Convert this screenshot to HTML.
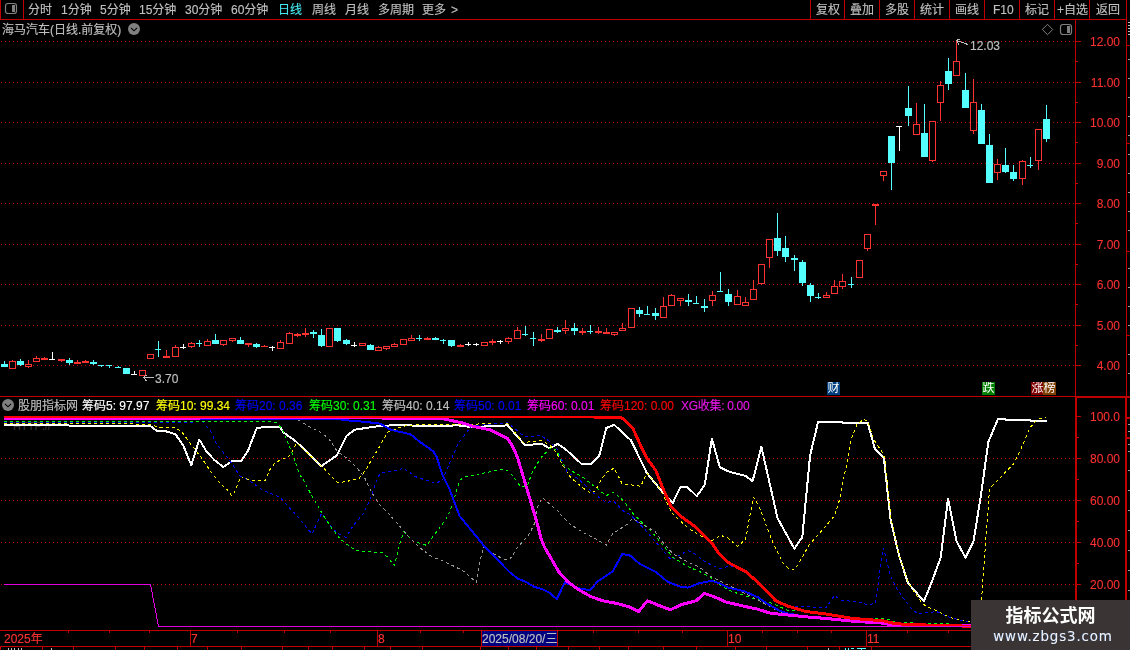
<!DOCTYPE html>
<html><head><meta charset="utf-8"><title>chart</title>
<style>
html,body{margin:0;padding:0;background:#000;}
body{width:1130px;height:650px;position:relative;overflow:hidden;font-family:"Liberation Sans","Noto Sans CJK SC",sans-serif;}
.t{position:absolute;font-size:12px;line-height:14px;white-space:nowrap;margin-top:1px;-webkit-text-stroke:0.15px currentColor;}
.r{text-align:right;-webkit-text-stroke:0.1px currentColor;}
.b{position:absolute;width:13px;height:13px;color:#fff;font-size:12px;line-height:13px;text-align:center;overflow:hidden;}
.wm1{position:absolute;left:971px;width:159px;top:604px;text-align:center;color:#fff;font-weight:bold;font-size:18px;line-height:24px;}
.wm2{position:absolute;left:976px;width:154px;top:626px;text-align:center;color:#f2f2f2;font-family:'DejaVu Sans',sans-serif;font-size:13.5px;letter-spacing:0.8px;line-height:20px;text-shadow:-0.5px 0.3px 0 rgba(58,123,224,0.7);}
</style></head><body>
<div class="t" style="left:13px;top:418px;color:#383838;font-size:11px">HTTP://</div>
<svg width="1130" height="650" viewBox="0 0 1130 650" shape-rendering="crispEdges" style="position:absolute;left:0;top:0">
<rect x="0" y="0" width="1" height="20" fill="#c00000"/>
<rect x="0" y="19" width="1127" height="1" fill="#c00000"/>
<rect x="23" y="0" width="1" height="19" fill="#c00000"/>
<rect x="810" y="0" width="1" height="19" fill="#c00000"/>
<rect x="844" y="0" width="1" height="19" fill="#c00000"/>
<rect x="879" y="0" width="1" height="19" fill="#c00000"/>
<rect x="914" y="0" width="1" height="19" fill="#c00000"/>
<rect x="949" y="0" width="1" height="19" fill="#c00000"/>
<rect x="984" y="0" width="1" height="19" fill="#c00000"/>
<rect x="1019" y="0" width="1" height="19" fill="#c00000"/>
<rect x="1054" y="0" width="1" height="19" fill="#c00000"/>
<rect x="1089" y="0" width="1" height="19" fill="#c00000"/>
<rect x="1126" y="0" width="1" height="397" fill="#c00000"/>
<rect x="1125" y="397" width="2" height="253" fill="#c00000"/>
<rect x="1075" y="19" width="1" height="378" fill="#c00000"/>
<rect x="1075" y="397" width="2" height="250" fill="#c00000"/>
<rect x="0" y="396" width="1075" height="1" fill="#c00000"/>
<rect x="1075" y="396" width="55" height="2" fill="#c00000"/>
<rect x="0" y="630" width="1075" height="1" fill="#c00000"/>
<rect x="0" y="646" width="1130" height="1" fill="#c00000"/>
<rect x="1127" y="45" width="3" height="1" fill="#c00000"/>
<rect x="1127" y="143" width="3" height="1" fill="#c00000"/>
<rect x="1127" y="251" width="3" height="1" fill="#c00000"/>
<rect x="1127" y="335" width="3" height="1" fill="#c00000"/>
<rect x="1127" y="417" width="3" height="2" fill="#c00000"/>
<rect x="1127" y="437" width="3" height="2" fill="#c00000"/>
<rect x="1128" y="59" width="2" height="1" fill="#a0a0a0"/>
<rect x="1128" y="78" width="2" height="1" fill="#a0a0a0"/>
<rect x="1128" y="97" width="2" height="1" fill="#a0a0a0"/>
<rect x="1128" y="116" width="2" height="1" fill="#a0a0a0"/>
<rect x="1128" y="135" width="2" height="1" fill="#a0a0a0"/>
<rect x="1128" y="154" width="2" height="1" fill="#a0a0a0"/>
<rect x="1128" y="173" width="2" height="1" fill="#a0a0a0"/>
<rect x="1128" y="192" width="2" height="1" fill="#a0a0a0"/>
<rect x="1128" y="211" width="2" height="1" fill="#a0a0a0"/>
<rect x="1128" y="230" width="2" height="1" fill="#a0a0a0"/>
<rect x="1128" y="268" width="2" height="1" fill="#a0a0a0"/>
<rect x="1128" y="287" width="2" height="1" fill="#a0a0a0"/>
<rect x="1128" y="306" width="2" height="1" fill="#a0a0a0"/>
<rect x="1128" y="325" width="2" height="1" fill="#a0a0a0"/>
<rect x="1128" y="354" width="2" height="1" fill="#a0a0a0"/>
<rect x="1128" y="373" width="2" height="1" fill="#a0a0a0"/>
<rect x="1128" y="424" width="2" height="1" fill="#a0a0a0"/>
<rect x="1128" y="431" width="2" height="1" fill="#a0a0a0"/>
<rect x="1128" y="444" width="2" height="1" fill="#a0a0a0"/>
<rect x="1128" y="451" width="2" height="1" fill="#a0a0a0"/>
<rect x="1128" y="470" width="2" height="1" fill="#a0a0a0"/>
<rect x="1128" y="490" width="2" height="1" fill="#a0a0a0"/>
<rect x="1128" y="510" width="2" height="1" fill="#a0a0a0"/>
<rect x="1128" y="530" width="2" height="1" fill="#a0a0a0"/>
<rect x="1128" y="550" width="2" height="1" fill="#a0a0a0"/>
<rect x="1128" y="570" width="2" height="1" fill="#a0a0a0"/>
<rect x="1128" y="590" width="2" height="1" fill="#a0a0a0"/>
<rect x="1128" y="22" width="2" height="1" fill="#c0c0c0"/>
<rect x="1128" y="25" width="2" height="1" fill="#c0c0c0"/>
<rect x="1128" y="28" width="2" height="1" fill="#c0c0c0"/>
<rect x="1128" y="31" width="2" height="1" fill="#c0c0c0"/>
<rect x="1128" y="34" width="2" height="1" fill="#c0c0c0"/>
<path d="M1 41.5H1074" stroke="#c00000" stroke-width="1" stroke-dasharray="1 3" fill="none"/>
<path d="M1 82.5H1074" stroke="#c00000" stroke-width="1" stroke-dasharray="1 3" fill="none"/>
<path d="M1 122.5H1074" stroke="#c00000" stroke-width="1" stroke-dasharray="1 3" fill="none"/>
<path d="M1 163.5H1074" stroke="#c00000" stroke-width="1" stroke-dasharray="1 3" fill="none"/>
<path d="M1 203.5H1074" stroke="#c00000" stroke-width="1" stroke-dasharray="1 3" fill="none"/>
<path d="M1 244.5H1074" stroke="#c00000" stroke-width="1" stroke-dasharray="1 3" fill="none"/>
<path d="M1 284.5H1074" stroke="#c00000" stroke-width="1" stroke-dasharray="1 3" fill="none"/>
<path d="M1 325.5H1074" stroke="#c00000" stroke-width="1" stroke-dasharray="1 3" fill="none"/>
<path d="M1 365.5H1074" stroke="#c00000" stroke-width="1" stroke-dasharray="1 3" fill="none"/>
<path d="M1 458.5H1074" stroke="#c00000" stroke-width="1" stroke-dasharray="1 3" fill="none"/>
<path d="M1 500.5H1074" stroke="#c00000" stroke-width="1" stroke-dasharray="1 3" fill="none"/>
<path d="M1 542.5H1074" stroke="#c00000" stroke-width="1" stroke-dasharray="1 3" fill="none"/>
<path d="M1 584.5H1074" stroke="#c00000" stroke-width="1" stroke-dasharray="1 3" fill="none"/>
<rect x="1076" y="41" width="5" height="1" fill="#c00000"/>
<rect x="1076" y="61" width="2" height="1" fill="#c00000"/>
<rect x="1076" y="82" width="5" height="1" fill="#c00000"/>
<rect x="1076" y="102" width="2" height="1" fill="#c00000"/>
<rect x="1076" y="122" width="5" height="1" fill="#c00000"/>
<rect x="1076" y="142" width="2" height="1" fill="#c00000"/>
<rect x="1076" y="163" width="5" height="1" fill="#c00000"/>
<rect x="1076" y="183" width="2" height="1" fill="#c00000"/>
<rect x="1076" y="203" width="5" height="1" fill="#c00000"/>
<rect x="1076" y="223" width="2" height="1" fill="#c00000"/>
<rect x="1076" y="244" width="5" height="1" fill="#c00000"/>
<rect x="1076" y="264" width="2" height="1" fill="#c00000"/>
<rect x="1076" y="284" width="5" height="1" fill="#c00000"/>
<rect x="1076" y="304" width="2" height="1" fill="#c00000"/>
<rect x="1076" y="325" width="5" height="1" fill="#c00000"/>
<rect x="1076" y="345" width="2" height="1" fill="#c00000"/>
<rect x="1076" y="365" width="5" height="1" fill="#c00000"/>
<rect x="1077" y="416" width="4" height="1" fill="#c00000"/>
<rect x="1077" y="458" width="4" height="1" fill="#c00000"/>
<rect x="1077" y="500" width="4" height="1" fill="#c00000"/>
<rect x="1077" y="542" width="4" height="1" fill="#c00000"/>
<rect x="1077" y="584" width="4" height="1" fill="#c00000"/>
<rect x="1077" y="626" width="4" height="1" fill="#c00000"/>
<rect x="1077" y="437" width="2" height="1" fill="#c00000"/>
<rect x="1077" y="479" width="2" height="1" fill="#c00000"/>
<rect x="1077" y="521" width="2" height="1" fill="#c00000"/>
<rect x="1077" y="563" width="2" height="1" fill="#c00000"/>
<rect x="1077" y="605" width="2" height="1" fill="#c00000"/>
<rect x="68" y="631" width="1" height="2" fill="#c00000"/>
<rect x="109" y="631" width="1" height="2" fill="#c00000"/>
<rect x="149" y="631" width="1" height="2" fill="#c00000"/>
<rect x="237" y="631" width="1" height="2" fill="#c00000"/>
<rect x="284" y="631" width="1" height="2" fill="#c00000"/>
<rect x="330" y="631" width="1" height="2" fill="#c00000"/>
<rect x="420" y="631" width="1" height="2" fill="#c00000"/>
<rect x="463" y="631" width="1" height="2" fill="#c00000"/>
<rect x="593" y="631" width="1" height="2" fill="#c00000"/>
<rect x="638" y="631" width="1" height="2" fill="#c00000"/>
<rect x="682" y="631" width="1" height="2" fill="#c00000"/>
<rect x="762" y="631" width="1" height="2" fill="#c00000"/>
<rect x="797" y="631" width="1" height="2" fill="#c00000"/>
<rect x="831" y="631" width="1" height="2" fill="#c00000"/>
<rect x="907" y="631" width="1" height="2" fill="#c00000"/>
<rect x="948" y="631" width="1" height="2" fill="#c00000"/>
<rect x="989" y="631" width="1" height="2" fill="#c00000"/>
<rect x="1030" y="631" width="1" height="2" fill="#c00000"/>
<rect x="190" y="631" width="1" height="15" fill="#c00000"/>
<rect x="377" y="631" width="1" height="15" fill="#c00000"/>
<rect x="727" y="631" width="1" height="15" fill="#c00000"/>
<rect x="866" y="631" width="1" height="15" fill="#c00000"/>
<rect x="0" y="647" width="1" height="3" fill="#c00000"/>
<rect x="42" y="647" width="1" height="3" fill="#c00000"/>
<rect x="73" y="647" width="1" height="3" fill="#c00000"/>
<rect x="115" y="647" width="1" height="3" fill="#c00000"/>
<rect x="144" y="647" width="1" height="3" fill="#c00000"/>
<rect x="177" y="647" width="1" height="3" fill="#c00000"/>
<rect x="207" y="647" width="1" height="3" fill="#c00000"/>
<rect x="241" y="647" width="1" height="3" fill="#c00000"/>
<rect x="282" y="647" width="1" height="3" fill="#c00000"/>
<rect x="308" y="647" width="1" height="3" fill="#c00000"/>
<rect x="332" y="647" width="1" height="3" fill="#c00000"/>
<rect x="364" y="647" width="1" height="3" fill="#c00000"/>
<rect x="390" y="647" width="1" height="3" fill="#c00000"/>
<rect x="422" y="647" width="1" height="3" fill="#c00000"/>
<rect x="480" y="647" width="1" height="3" fill="#c00000"/>
<rect x="508" y="647" width="1" height="3" fill="#c00000"/>
<rect x="536" y="647" width="1" height="3" fill="#c00000"/>
<rect x="568" y="647" width="1" height="3" fill="#c00000"/>
<rect x="599" y="647" width="1" height="3" fill="#c00000"/>
<rect x="628" y="647" width="1" height="3" fill="#c00000"/>
<rect x="663" y="647" width="1" height="3" fill="#c00000"/>
<rect x="696" y="647" width="1" height="3" fill="#c00000"/>
<rect x="735" y="647" width="1" height="3" fill="#c00000"/>
<rect x="766" y="647" width="1" height="3" fill="#c00000"/>
<rect x="807" y="647" width="1" height="3" fill="#c00000"/>
<rect x="839" y="647" width="1" height="3" fill="#c00000"/>
<rect x="871" y="647" width="1" height="3" fill="#c00000"/>
<rect x="8" y="648" width="1" height="2" fill="#c0c0c0"/>
<rect x="11" y="648" width="1" height="2" fill="#c0c0c0"/>
<rect x="14" y="648" width="1" height="2" fill="#c0c0c0"/>
<rect x="18" y="648" width="1" height="2" fill="#c0c0c0"/>
<rect x="21" y="648" width="1" height="2" fill="#c0c0c0"/>
<rect x="51" y="648" width="1" height="2" fill="#c0c0c0"/>
<rect x="845" y="648" width="1" height="2" fill="#54ffff"/>
<rect x="848" y="648" width="1" height="2" fill="#54ffff"/>
<rect x="851" y="648" width="3" height="1" fill="#54ffff"/>
<rect x="857" y="648" width="9" height="1" fill="#54ffff"/>
<rect x="861" y="649" width="1" height="1" fill="#54ffff"/>
<rect x="828" y="648" width="1" height="2" fill="#c0c0c0"/>
<rect x="4" y="361" width="1" height="3" fill="#54ffff"/>
<rect x="1" y="364" width="7" height="3" fill="#54ffff"/>
<rect x="12" y="360" width="1" height="1" fill="#ff3232"/>
<rect x="9" y="361" width="7" height="8" fill="#ff3232"/>
<rect x="10" y="362" width="5" height="6" fill="#000"/>
<rect x="20" y="359" width="1" height="2" fill="#54ffff"/>
<rect x="20" y="365" width="1" height="1" fill="#54ffff"/>
<rect x="17" y="361" width="7" height="4" fill="#54ffff"/>
<rect x="28" y="360" width="1" height="4" fill="#ff3232"/>
<rect x="28" y="367" width="1" height="1" fill="#ff3232"/>
<rect x="25" y="364" width="7" height="3" fill="#ff3232"/>
<rect x="26" y="365" width="5" height="1" fill="#000"/>
<rect x="36" y="356" width="1" height="2" fill="#ff3232"/>
<rect x="33" y="358" width="7" height="4" fill="#ff3232"/>
<rect x="34" y="359" width="5" height="2" fill="#000"/>
<rect x="44" y="357" width="1" height="1" fill="#ff3232"/>
<rect x="41" y="358" width="7" height="2" fill="#ff3232"/>
<rect x="52" y="352" width="1" height="8" fill="#ffffff"/>
<rect x="49" y="359" width="6" height="1" fill="#ffffff"/>
<rect x="61" y="361" width="1" height="1" fill="#ff3232"/>
<rect x="58" y="359" width="7" height="2" fill="#ff3232"/>
<rect x="69" y="358" width="1" height="2" fill="#54ffff"/>
<rect x="69" y="363" width="1" height="2" fill="#54ffff"/>
<rect x="66" y="360" width="7" height="3" fill="#54ffff"/>
<rect x="77" y="360" width="1" height="2" fill="#ff3232"/>
<rect x="74" y="362" width="7" height="2" fill="#ff3232"/>
<rect x="85" y="360" width="1" height="1" fill="#ff3232"/>
<rect x="82" y="361" width="7" height="2" fill="#ff3232"/>
<rect x="93" y="360" width="1" height="2" fill="#54ffff"/>
<rect x="93" y="364" width="1" height="1" fill="#54ffff"/>
<rect x="90" y="362" width="7" height="2" fill="#54ffff"/>
<rect x="101" y="365" width="1" height="2" fill="#54ffff"/>
<rect x="98" y="365" width="6" height="1" fill="#54ffff"/>
<rect x="109" y="365" width="1" height="3" fill="#54ffff"/>
<rect x="106" y="365" width="6" height="1" fill="#54ffff"/>
<rect x="118" y="366" width="1" height="2" fill="#54ffff"/>
<rect x="115" y="367" width="6" height="1" fill="#54ffff"/>
<rect x="123" y="368" width="7" height="6" fill="#54ffff"/>
<rect x="134" y="371" width="1" height="4" fill="#ffffff"/>
<rect x="131" y="374" width="6" height="1" fill="#ffffff"/>
<rect x="139" y="370" width="7" height="6" fill="#ff3232"/>
<rect x="140" y="371" width="5" height="4" fill="#000"/>
<rect x="147" y="354" width="7" height="5" fill="#ff3232"/>
<rect x="148" y="355" width="5" height="3" fill="#000"/>
<rect x="158" y="341" width="1" height="16" fill="#54ffff"/>
<rect x="155" y="349" width="6" height="1" fill="#54ffff"/>
<rect x="166" y="350" width="1" height="6" fill="#ff3232"/>
<rect x="163" y="356" width="7" height="2" fill="#ff3232"/>
<rect x="175" y="345" width="1" height="2" fill="#ff3232"/>
<rect x="172" y="347" width="7" height="10" fill="#ff3232"/>
<rect x="173" y="348" width="5" height="8" fill="#000"/>
<rect x="183" y="344" width="1" height="5" fill="#ffffff"/>
<rect x="180" y="347" width="6" height="1" fill="#ffffff"/>
<rect x="191" y="342" width="1" height="1" fill="#ff3232"/>
<rect x="191" y="347" width="1" height="1" fill="#ff3232"/>
<rect x="188" y="343" width="7" height="4" fill="#ff3232"/>
<rect x="189" y="344" width="5" height="2" fill="#000"/>
<rect x="199" y="340" width="1" height="7" fill="#54ffff"/>
<rect x="196" y="343" width="6" height="1" fill="#54ffff"/>
<rect x="207" y="339" width="1" height="2" fill="#ff3232"/>
<rect x="204" y="341" width="7" height="5" fill="#ff3232"/>
<rect x="205" y="342" width="5" height="3" fill="#000"/>
<rect x="215" y="334" width="1" height="6" fill="#54ffff"/>
<rect x="212" y="340" width="7" height="4" fill="#54ffff"/>
<rect x="223" y="345" width="1" height="1" fill="#ff3232"/>
<rect x="220" y="340" width="7" height="5" fill="#ff3232"/>
<rect x="221" y="341" width="5" height="3" fill="#000"/>
<rect x="232" y="341" width="1" height="1" fill="#ff3232"/>
<rect x="229" y="338" width="7" height="3" fill="#ff3232"/>
<rect x="230" y="339" width="5" height="1" fill="#000"/>
<rect x="240" y="337" width="1" height="3" fill="#54ffff"/>
<rect x="237" y="340" width="7" height="4" fill="#54ffff"/>
<rect x="248" y="345" width="1" height="2" fill="#ff3232"/>
<rect x="245" y="343" width="7" height="2" fill="#ff3232"/>
<rect x="256" y="343" width="1" height="1" fill="#54ffff"/>
<rect x="256" y="347" width="1" height="1" fill="#54ffff"/>
<rect x="253" y="344" width="7" height="3" fill="#54ffff"/>
<rect x="264" y="345" width="1" height="1" fill="#ff3232"/>
<rect x="261" y="346" width="7" height="1" fill="#ff3232"/>
<rect x="272" y="346" width="1" height="5" fill="#ffffff"/>
<rect x="269" y="347" width="6" height="1" fill="#ffffff"/>
<rect x="280" y="340" width="1" height="2" fill="#ff3232"/>
<rect x="277" y="342" width="7" height="7" fill="#ff3232"/>
<rect x="278" y="343" width="5" height="5" fill="#000"/>
<rect x="289" y="332" width="1" height="1" fill="#ff3232"/>
<rect x="286" y="333" width="7" height="11" fill="#ff3232"/>
<rect x="287" y="334" width="5" height="9" fill="#000"/>
<rect x="297" y="333" width="1" height="1" fill="#ff3232"/>
<rect x="297" y="336" width="1" height="1" fill="#ff3232"/>
<rect x="294" y="334" width="7" height="2" fill="#ff3232"/>
<rect x="305" y="328" width="1" height="5" fill="#ff3232"/>
<rect x="305" y="335" width="1" height="2" fill="#ff3232"/>
<rect x="302" y="333" width="7" height="2" fill="#ff3232"/>
<rect x="313" y="330" width="1" height="2" fill="#54ffff"/>
<rect x="313" y="334" width="1" height="4" fill="#54ffff"/>
<rect x="310" y="332" width="7" height="2" fill="#54ffff"/>
<rect x="321" y="329" width="1" height="6" fill="#54ffff"/>
<rect x="321" y="346" width="1" height="1" fill="#54ffff"/>
<rect x="318" y="335" width="7" height="11" fill="#54ffff"/>
<rect x="326" y="328" width="7" height="19" fill="#ff3232"/>
<rect x="327" y="329" width="5" height="17" fill="#000"/>
<rect x="337" y="341" width="1" height="1" fill="#54ffff"/>
<rect x="334" y="328" width="7" height="13" fill="#54ffff"/>
<rect x="346" y="339" width="1" height="1" fill="#54ffff"/>
<rect x="346" y="344" width="1" height="1" fill="#54ffff"/>
<rect x="343" y="340" width="7" height="4" fill="#54ffff"/>
<rect x="354" y="342" width="1" height="5" fill="#ffffff"/>
<rect x="351" y="345" width="6" height="1" fill="#ffffff"/>
<rect x="359" y="343" width="7" height="3" fill="#ff3232"/>
<rect x="360" y="344" width="5" height="1" fill="#000"/>
<rect x="370" y="344" width="1" height="1" fill="#54ffff"/>
<rect x="367" y="345" width="7" height="5" fill="#54ffff"/>
<rect x="378" y="346" width="1" height="1" fill="#ff3232"/>
<rect x="375" y="347" width="7" height="4" fill="#ff3232"/>
<rect x="376" y="348" width="5" height="2" fill="#000"/>
<rect x="386" y="349" width="1" height="1" fill="#ff3232"/>
<rect x="383" y="346" width="7" height="3" fill="#ff3232"/>
<rect x="384" y="347" width="5" height="1" fill="#000"/>
<rect x="394" y="343" width="1" height="1" fill="#ff3232"/>
<rect x="391" y="344" width="7" height="3" fill="#ff3232"/>
<rect x="392" y="345" width="5" height="1" fill="#000"/>
<rect x="400" y="339" width="7" height="6" fill="#ff3232"/>
<rect x="401" y="340" width="5" height="4" fill="#000"/>
<rect x="411" y="335" width="1" height="3" fill="#ff3232"/>
<rect x="408" y="338" width="7" height="3" fill="#ff3232"/>
<rect x="409" y="339" width="5" height="1" fill="#000"/>
<rect x="419" y="335" width="1" height="6" fill="#54ffff"/>
<rect x="416" y="338" width="6" height="1" fill="#54ffff"/>
<rect x="427" y="337" width="1" height="1" fill="#ff3232"/>
<rect x="424" y="338" width="7" height="2" fill="#ff3232"/>
<rect x="435" y="337" width="1" height="1" fill="#54ffff"/>
<rect x="432" y="338" width="7" height="2" fill="#54ffff"/>
<rect x="443" y="339" width="1" height="5" fill="#54ffff"/>
<rect x="440" y="340" width="6" height="1" fill="#54ffff"/>
<rect x="451" y="346" width="1" height="1" fill="#54ffff"/>
<rect x="448" y="340" width="7" height="6" fill="#54ffff"/>
<rect x="460" y="344" width="1" height="1" fill="#ff3232"/>
<rect x="457" y="345" width="7" height="2" fill="#ff3232"/>
<rect x="468" y="342" width="1" height="4" fill="#ffffff"/>
<rect x="465" y="344" width="6" height="1" fill="#ffffff"/>
<rect x="476" y="343" width="1" height="3" fill="#ffffff"/>
<rect x="473" y="344" width="6" height="1" fill="#ffffff"/>
<rect x="481" y="342" width="7" height="4" fill="#ff3232"/>
<rect x="482" y="343" width="5" height="2" fill="#000"/>
<rect x="492" y="339" width="1" height="2" fill="#ff3232"/>
<rect x="492" y="343" width="1" height="2" fill="#ff3232"/>
<rect x="489" y="341" width="7" height="2" fill="#ff3232"/>
<rect x="500" y="340" width="1" height="4" fill="#ffffff"/>
<rect x="497" y="341" width="6" height="1" fill="#ffffff"/>
<rect x="508" y="337" width="1" height="1" fill="#ff3232"/>
<rect x="508" y="342" width="1" height="2" fill="#ff3232"/>
<rect x="505" y="338" width="7" height="4" fill="#ff3232"/>
<rect x="506" y="339" width="5" height="2" fill="#000"/>
<rect x="517" y="327" width="1" height="3" fill="#ff3232"/>
<rect x="514" y="330" width="7" height="9" fill="#ff3232"/>
<rect x="515" y="331" width="5" height="7" fill="#000"/>
<rect x="525" y="326" width="1" height="10" fill="#54ffff"/>
<rect x="522" y="334" width="6" height="1" fill="#54ffff"/>
<rect x="533" y="332" width="1" height="14" fill="#54ffff"/>
<rect x="530" y="338" width="6" height="1" fill="#54ffff"/>
<rect x="541" y="334" width="1" height="5" fill="#ff3232"/>
<rect x="541" y="341" width="1" height="1" fill="#ff3232"/>
<rect x="538" y="339" width="7" height="2" fill="#ff3232"/>
<rect x="546" y="329" width="7" height="10" fill="#ff3232"/>
<rect x="547" y="330" width="5" height="8" fill="#000"/>
<rect x="557" y="327" width="1" height="3" fill="#54ffff"/>
<rect x="557" y="332" width="1" height="1" fill="#54ffff"/>
<rect x="554" y="330" width="7" height="2" fill="#54ffff"/>
<rect x="565" y="320" width="1" height="8" fill="#ff3232"/>
<rect x="565" y="331" width="1" height="3" fill="#ff3232"/>
<rect x="562" y="328" width="7" height="3" fill="#ff3232"/>
<rect x="563" y="329" width="5" height="1" fill="#000"/>
<rect x="574" y="323" width="1" height="5" fill="#54ffff"/>
<rect x="574" y="331" width="1" height="4" fill="#54ffff"/>
<rect x="571" y="328" width="7" height="3" fill="#54ffff"/>
<rect x="582" y="328" width="1" height="3" fill="#ff3232"/>
<rect x="582" y="333" width="1" height="2" fill="#ff3232"/>
<rect x="579" y="331" width="7" height="2" fill="#ff3232"/>
<rect x="590" y="325" width="1" height="9" fill="#54ffff"/>
<rect x="587" y="331" width="6" height="1" fill="#54ffff"/>
<rect x="598" y="327" width="1" height="4" fill="#ff3232"/>
<rect x="598" y="333" width="1" height="1" fill="#ff3232"/>
<rect x="595" y="331" width="7" height="2" fill="#ff3232"/>
<rect x="606" y="328" width="1" height="4" fill="#ff3232"/>
<rect x="603" y="332" width="7" height="2" fill="#ff3232"/>
<rect x="614" y="335" width="1" height="1" fill="#ff3232"/>
<rect x="611" y="332" width="7" height="3" fill="#ff3232"/>
<rect x="612" y="333" width="5" height="1" fill="#000"/>
<rect x="622" y="323" width="1" height="5" fill="#ff3232"/>
<rect x="619" y="328" width="7" height="3" fill="#ff3232"/>
<rect x="620" y="329" width="5" height="1" fill="#000"/>
<rect x="628" y="308" width="7" height="20" fill="#ff3232"/>
<rect x="629" y="309" width="5" height="18" fill="#000"/>
<rect x="639" y="307" width="1" height="3" fill="#54ffff"/>
<rect x="639" y="314" width="1" height="3" fill="#54ffff"/>
<rect x="636" y="310" width="7" height="4" fill="#54ffff"/>
<rect x="647" y="306" width="1" height="9" fill="#54ffff"/>
<rect x="644" y="314" width="6" height="1" fill="#54ffff"/>
<rect x="655" y="308" width="1" height="5" fill="#54ffff"/>
<rect x="655" y="316" width="1" height="4" fill="#54ffff"/>
<rect x="652" y="313" width="7" height="3" fill="#54ffff"/>
<rect x="663" y="297" width="1" height="9" fill="#ff3232"/>
<rect x="660" y="306" width="7" height="12" fill="#ff3232"/>
<rect x="661" y="307" width="5" height="10" fill="#000"/>
<rect x="671" y="294" width="1" height="1" fill="#ff3232"/>
<rect x="668" y="295" width="7" height="11" fill="#ff3232"/>
<rect x="669" y="296" width="5" height="9" fill="#000"/>
<rect x="680" y="301" width="1" height="5" fill="#ff3232"/>
<rect x="677" y="298" width="7" height="3" fill="#ff3232"/>
<rect x="678" y="299" width="5" height="1" fill="#000"/>
<rect x="688" y="294" width="1" height="6" fill="#54ffff"/>
<rect x="688" y="302" width="1" height="4" fill="#54ffff"/>
<rect x="685" y="300" width="7" height="2" fill="#54ffff"/>
<rect x="696" y="296" width="1" height="8" fill="#54ffff"/>
<rect x="693" y="303" width="6" height="1" fill="#54ffff"/>
<rect x="704" y="299" width="1" height="7" fill="#54ffff"/>
<rect x="704" y="308" width="1" height="4" fill="#54ffff"/>
<rect x="701" y="306" width="7" height="2" fill="#54ffff"/>
<rect x="712" y="291" width="1" height="4" fill="#ff3232"/>
<rect x="712" y="301" width="1" height="5" fill="#ff3232"/>
<rect x="709" y="295" width="7" height="6" fill="#ff3232"/>
<rect x="710" y="296" width="5" height="4" fill="#000"/>
<rect x="720" y="272" width="1" height="20" fill="#54ffff"/>
<rect x="717" y="291" width="6" height="1" fill="#54ffff"/>
<rect x="728" y="289" width="1" height="5" fill="#54ffff"/>
<rect x="728" y="302" width="1" height="4" fill="#54ffff"/>
<rect x="725" y="294" width="7" height="8" fill="#54ffff"/>
<rect x="737" y="290" width="1" height="6" fill="#ff3232"/>
<rect x="734" y="296" width="7" height="9" fill="#ff3232"/>
<rect x="735" y="297" width="5" height="7" fill="#000"/>
<rect x="745" y="297" width="1" height="5" fill="#ff3232"/>
<rect x="742" y="302" width="7" height="4" fill="#ff3232"/>
<rect x="743" y="303" width="5" height="2" fill="#000"/>
<rect x="753" y="280" width="1" height="9" fill="#ff3232"/>
<rect x="750" y="289" width="7" height="11" fill="#ff3232"/>
<rect x="751" y="290" width="5" height="9" fill="#000"/>
<rect x="761" y="284" width="1" height="1" fill="#ff3232"/>
<rect x="758" y="264" width="7" height="20" fill="#ff3232"/>
<rect x="759" y="265" width="5" height="18" fill="#000"/>
<rect x="769" y="258" width="1" height="10" fill="#ff3232"/>
<rect x="766" y="239" width="7" height="19" fill="#ff3232"/>
<rect x="767" y="240" width="5" height="17" fill="#000"/>
<rect x="777" y="213" width="1" height="25" fill="#54ffff"/>
<rect x="777" y="251" width="1" height="5" fill="#54ffff"/>
<rect x="774" y="238" width="7" height="13" fill="#54ffff"/>
<rect x="785" y="236" width="1" height="12" fill="#54ffff"/>
<rect x="785" y="257" width="1" height="5" fill="#54ffff"/>
<rect x="782" y="248" width="7" height="9" fill="#54ffff"/>
<rect x="794" y="255" width="1" height="3" fill="#54ffff"/>
<rect x="794" y="260" width="1" height="11" fill="#54ffff"/>
<rect x="791" y="258" width="7" height="2" fill="#54ffff"/>
<rect x="802" y="260" width="1" height="2" fill="#54ffff"/>
<rect x="802" y="283" width="1" height="3" fill="#54ffff"/>
<rect x="799" y="262" width="7" height="21" fill="#54ffff"/>
<rect x="810" y="283" width="1" height="2" fill="#54ffff"/>
<rect x="810" y="296" width="1" height="6" fill="#54ffff"/>
<rect x="807" y="285" width="7" height="11" fill="#54ffff"/>
<rect x="818" y="293" width="1" height="6" fill="#54ffff"/>
<rect x="815" y="297" width="6" height="1" fill="#54ffff"/>
<rect x="826" y="292" width="1" height="3" fill="#ff3232"/>
<rect x="823" y="295" width="7" height="3" fill="#ff3232"/>
<rect x="824" y="296" width="5" height="1" fill="#000"/>
<rect x="834" y="280" width="1" height="6" fill="#ff3232"/>
<rect x="831" y="286" width="7" height="8" fill="#ff3232"/>
<rect x="832" y="287" width="5" height="6" fill="#000"/>
<rect x="842" y="274" width="1" height="7" fill="#ff3232"/>
<rect x="842" y="287" width="1" height="2" fill="#ff3232"/>
<rect x="839" y="281" width="7" height="6" fill="#ff3232"/>
<rect x="840" y="282" width="5" height="4" fill="#000"/>
<rect x="851" y="277" width="1" height="11" fill="#54ffff"/>
<rect x="848" y="284" width="6" height="1" fill="#54ffff"/>
<rect x="856" y="260" width="7" height="18" fill="#ff3232"/>
<rect x="857" y="261" width="5" height="16" fill="#000"/>
<rect x="867" y="249" width="1" height="2" fill="#ff3232"/>
<rect x="864" y="234" width="7" height="15" fill="#ff3232"/>
<rect x="865" y="235" width="5" height="13" fill="#000"/>
<rect x="875" y="206" width="1" height="19" fill="#ff3232"/>
<rect x="872" y="204" width="7" height="2" fill="#ff3232"/>
<rect x="883" y="176" width="1" height="5" fill="#ff3232"/>
<rect x="880" y="171" width="7" height="5" fill="#ff3232"/>
<rect x="881" y="172" width="5" height="3" fill="#000"/>
<rect x="891" y="163" width="1" height="27" fill="#54ffff"/>
<rect x="888" y="136" width="7" height="27" fill="#54ffff"/>
<rect x="899" y="126" width="1" height="25" fill="#ffffff"/>
<rect x="896" y="126" width="6" height="1" fill="#ffffff"/>
<rect x="908" y="86" width="1" height="22" fill="#54ffff"/>
<rect x="908" y="116" width="1" height="10" fill="#54ffff"/>
<rect x="905" y="108" width="7" height="8" fill="#54ffff"/>
<rect x="916" y="103" width="1" height="21" fill="#ff3232"/>
<rect x="913" y="124" width="7" height="11" fill="#ff3232"/>
<rect x="914" y="125" width="5" height="9" fill="#000"/>
<rect x="924" y="104" width="1" height="29" fill="#54ffff"/>
<rect x="921" y="133" width="7" height="24" fill="#54ffff"/>
<rect x="932" y="161" width="1" height="1" fill="#ff3232"/>
<rect x="929" y="121" width="7" height="40" fill="#ff3232"/>
<rect x="930" y="122" width="5" height="38" fill="#000"/>
<rect x="940" y="81" width="1" height="4" fill="#ff3232"/>
<rect x="940" y="103" width="1" height="18" fill="#ff3232"/>
<rect x="937" y="85" width="7" height="18" fill="#ff3232"/>
<rect x="938" y="86" width="5" height="16" fill="#000"/>
<rect x="948" y="58" width="1" height="13" fill="#54ffff"/>
<rect x="948" y="84" width="1" height="6" fill="#54ffff"/>
<rect x="945" y="71" width="7" height="13" fill="#54ffff"/>
<rect x="956" y="40" width="1" height="21" fill="#ff3232"/>
<rect x="953" y="61" width="7" height="15" fill="#ff3232"/>
<rect x="954" y="62" width="5" height="13" fill="#000"/>
<rect x="965" y="73" width="1" height="17" fill="#54ffff"/>
<rect x="962" y="90" width="7" height="18" fill="#54ffff"/>
<rect x="973" y="79" width="1" height="23" fill="#ff3232"/>
<rect x="973" y="131" width="1" height="3" fill="#ff3232"/>
<rect x="970" y="102" width="7" height="29" fill="#ff3232"/>
<rect x="971" y="103" width="5" height="27" fill="#000"/>
<rect x="981" y="104" width="1" height="6" fill="#54ffff"/>
<rect x="978" y="110" width="7" height="34" fill="#54ffff"/>
<rect x="989" y="134" width="1" height="11" fill="#54ffff"/>
<rect x="986" y="145" width="7" height="38" fill="#54ffff"/>
<rect x="997" y="159" width="1" height="5" fill="#ff3232"/>
<rect x="997" y="173" width="1" height="7" fill="#ff3232"/>
<rect x="994" y="164" width="7" height="9" fill="#ff3232"/>
<rect x="995" y="165" width="5" height="7" fill="#000"/>
<rect x="1005" y="148" width="1" height="17" fill="#54ffff"/>
<rect x="1005" y="172" width="1" height="1" fill="#54ffff"/>
<rect x="1002" y="165" width="7" height="7" fill="#54ffff"/>
<rect x="1013" y="165" width="1" height="7" fill="#54ffff"/>
<rect x="1013" y="179" width="1" height="2" fill="#54ffff"/>
<rect x="1010" y="172" width="7" height="7" fill="#54ffff"/>
<rect x="1022" y="160" width="1" height="1" fill="#ff3232"/>
<rect x="1022" y="179" width="1" height="6" fill="#ff3232"/>
<rect x="1019" y="161" width="7" height="18" fill="#ff3232"/>
<rect x="1020" y="162" width="5" height="16" fill="#000"/>
<rect x="1030" y="157" width="1" height="11" fill="#54ffff"/>
<rect x="1027" y="165" width="6" height="1" fill="#54ffff"/>
<rect x="1038" y="161" width="1" height="9" fill="#ff3232"/>
<rect x="1035" y="129" width="7" height="32" fill="#ff3232"/>
<rect x="1036" y="130" width="5" height="30" fill="#000"/>
<rect x="1046" y="105" width="1" height="14" fill="#54ffff"/>
<rect x="1046" y="139" width="1" height="3" fill="#54ffff"/>
<rect x="1043" y="119" width="7" height="20" fill="#54ffff"/>
<path d="M143.5 377.5H154M143.5 377.5l3 -2.5M143.5 377.5l3 3.5" stroke="#c0c0c0" stroke-width="1" fill="none"/>
<path d="M956.5 40.5L968 44.5M956.5 39.5H960M956.5 40.5l2.5 4" stroke="#c0c0c0" stroke-width="1" fill="none"/>
<clipPath id="sc"><rect x="0" y="416" width="1075" height="214"/></clipPath><g clip-path="url(#sc)">
<polyline points="4.0,425.2 68.0,425.2 70.0,425.7 100.0,425.7 102.0,426.2 150.6,426.2 156.8,430.7 166.5,431.5 175.4,434.2 183.4,445.7 191.3,465.2 199.3,439.5 206.4,451.4 214.3,459.9 223.2,466.9 232.0,461.3 240.9,461.3 248.0,450.7 256.8,428.0 264.8,427.1 279.8,426.6 283.4,432.4 295.8,441.3 321.4,466.1 336.8,455.4 346.5,436.0 354.5,429.8 371.3,427.1 380.2,425.9 405.0,424.8 419.1,426.2 458.0,425.4 472.2,427.1 507.6,425.4 524.8,444.8 532.7,444.8 534.5,443.6 541.6,443.6 549.6,448.4 557.5,443.9 565.5,449.2 581.4,463.8 591.2,463.8 599.1,456.3 606.2,428.0 614.2,424.8 631.0,440.4 646.9,473.1 659.3,488.2 672.6,503.2 680.5,486.8 687.6,487.3 696.8,496.2 704.8,484.6 711.9,438.6 719.8,467.3 729.6,471.9 745.5,475.8 752.6,481.1 761.4,446.9 777.5,518.0 794.3,548.6 802.3,537.1 810.1,455.4 818.1,421.8 842.0,421.8 842.8,423.1 867.6,422.7 875.0,449.2 883.9,458.1 890.6,520.0 892.0,525.6 899.1,555.7 908.0,583.1 923.9,601.2 931.0,584.0 940.7,557.5 948.0,498.5 956.6,541.5 965.5,557.5 973.5,541.5 981.2,493.5 988.3,442.2 998.0,418.8 1005.1,418.8 1006.0,420.0 1030.0,420.0 1030.8,420.9 1046.7,420.9" fill="none" stroke="#ffffff" stroke-width="2" stroke-linejoin="round"/>
<polyline points="4.0,423.5 120.0,423.5 150.6,424.5 157.7,427.1 175.4,428.0 181.6,431.5 191.3,444.8 201.0,457.2 210.8,471.4 219.6,482.9 226.7,489.1 231.0,495.0 233.5,495.0 240.6,476.5 249.9,480.4 265.1,480.4 267.4,475.0 270.2,469.0 274.3,463.8 280.3,459.9 286.8,457.5 290.5,454.8 293.7,448.8 296.5,442.8 321.4,466.1 325.3,469.6 330.6,475.8 337.7,482.9 346.5,481.5 358.9,478.5 366.0,469.6 373.1,457.2 380.2,445.7 387.3,432.4 397.9,428.0 405.0,425.9 419.0,424.8 507.6,423.6 523.0,442.2 533.6,441.8 541.6,440.4 549.6,444.8 556.6,452.8 562.0,464.3 570.8,477.6 583.2,488.2 590.3,492.6 594.7,491.7 600.0,482.0 606.2,472.3 614.2,468.2 617.7,474.9 622.1,483.8 636.3,485.5 640.7,486.4 646.9,473.1 659.3,488.2 665.8,500.3 672.2,513.0 678.5,519.4 684.9,525.0 690.5,529.7 696.8,533.7 702.4,536.9 710.3,540.5 713.8,539.8 720.9,535.4 728.0,538.0 737.7,546.5 745.7,538.9 750.0,515.0 753.5,497.4 757.9,504.1 762.5,515.0 766.9,527.4 774.0,545.1 782.8,562.8 788.1,568.1 794.3,569.9 802.3,557.5 808.8,545.1 817.7,535.4 834.5,515.9 839.3,500.6 842.8,482.9 847.3,461.6 850.8,440.4 857.0,424.5 863.2,419.5 867.6,420.9 874.2,440.4 881.2,450.7 884.8,458.1 891.0,518.3 899.1,555.0 908.0,582.0 915.0,592.9 920.4,600.8 925.7,606.2 936.3,610.6 950.4,617.7 962.8,620.8 973.5,622.0 981.5,600.0 989.5,489.0 991.9,486.1 1014.0,463.4 1019.3,452.8 1029.9,428.0 1037.0,419.5 1045.8,417.4" fill="none" stroke="#ffff00" stroke-width="1" stroke-dasharray="3 3" stroke-linejoin="round"/>
<polyline points="4.0,422.5 190.0,422.5 198.4,421.5 202.8,421.8 210.8,431.5 216.1,443.0 230.3,461.6 240.0,475.8 249.7,481.1 263.9,490.8 279.8,497.0 281.0,498.5 297.5,516.5 312.0,534.0 321.5,513.5 333.0,529.0 339.0,534.0 346.0,537.5 353.0,526.0 363.0,514.0 369.0,502.0 372.0,495.0 375.0,484.0 380.2,473.1 397.9,470.5 403.2,467.8 415.6,476.7 426.2,480.2 435.0,482.9 442.1,481.1 451.0,459.9 458.0,443.9 470.4,427.1 479.3,425.4 507.6,422.7 524.8,436.9 540.7,435.4 549.6,441.3 556.6,448.4 567.3,472.3 577.9,478.5 592.0,491.7 600.9,498.8 606.2,502.3 614.2,501.5 623.9,511.2 630.6,515.0 643.0,527.4 655.4,541.5 671.3,560.1 680.2,554.8 688.1,550.4 696.1,554.8 706.7,562.8 720.9,569.0 729.7,565.4 745.7,572.0 758.0,583.0 766.9,592.0 775.8,600.5 790.0,606.2 800.0,606.7 826.5,607.4 830.1,601.7 834.5,595.5 840.7,600.0 862.0,602.6 868.1,605.3 875.2,603.0 877.9,585.8 881.4,559.2 883.5,548.3 886.7,561.0 890.3,575.2 895.6,586.7 902.7,597.3 911.5,608.8 916.8,613.2 923.9,613.2 936.3,611.5 950.4,617.7 966.4,621.7 1046.0,625.0" fill="none" stroke="#0000ff" stroke-width="1" stroke-dasharray="3 3" stroke-linejoin="round"/>
<polyline points="4.0,421.5 255.0,421.5 263.9,421.0 276.3,422.7 281.6,428.0 286.9,440.4 294.0,458.1 299.3,474.0 303.5,480.0 310.0,492.5 317.0,504.5 324.0,516.5 332.0,528.5 340.2,538.9 346.0,543.5 352.6,548.6 357.9,550.9 382.7,553.0 388.0,557.5 394.2,565.4 396.8,555.7 400.4,541.5 403.9,531.8 413.6,541.5 426.9,545.4 431.3,538.9 439.3,528.3 448.0,515.9 452.7,504.1 456.3,491.7 459.8,480.2 465.1,476.7 488.1,472.3 498.8,469.6 507.6,470.5 512.0,474.9 521.2,487.3 527.4,485.5 532.7,471.4 540.7,458.1 549.6,448.4 556.6,450.1 562.0,463.4 570.8,470.5 583.2,477.6 595.6,487.3 606.2,495.6 614.2,492.1 623.9,501.5 634.2,515.0 650.1,530.0 660.7,542.4 673.1,557.5 687.3,566.3 699.6,571.6 710.3,577.0 720.9,585.8 733.3,592.0 752.7,598.2 770.4,602.6 788.1,610.5 800.5,611.0 805.8,611.5 826.5,614.1 853.1,618.5 870.0,619.8 878.8,618.2 885.0,618.5 895.6,622.1 920.4,623.3 970.0,624.4 1046.0,625.5" fill="none" stroke="#00ff00" stroke-width="1" stroke-dasharray="3 3" stroke-linejoin="round"/>
<polyline points="4.0,419.0 292.0,419.0 299.3,420.5 310.0,427.1 318.8,431.5 321.8,433.3 328.8,438.6 337.7,451.9 346.5,458.1 355.4,466.1 364.2,476.7 371.3,491.7 378.4,503.2 389.7,515.0 410.0,538.0 419.8,547.7 433.0,557.5 439.3,559.2 450.6,564.6 463.0,570.8 476.3,582.3 478.0,571.6 482.5,550.4 484.2,546.9 496.6,555.7 505.5,559.6 509.9,559.2 517.9,546.9 528.5,535.4 534.7,523.0 538.1,505.9 542.5,497.4 549.6,504.1 558.4,511.2 561.2,515.0 571.0,524.7 583.4,532.7 595.8,538.9 606.4,545.1 612.6,533.6 626.7,524.7 632.4,518.5 643.0,524.7 655.4,531.8 660.7,539.8 673.1,553.9 687.3,561.9 699.6,567.2 710.3,576.1 758.0,600.0 777.5,610.6 788.1,615.0 805.8,616.8 826.5,618.5 853.1,621.2 885.0,623.3 892.0,625.6 1046.0,626.3" fill="none" stroke="#989898" stroke-width="1" stroke-dasharray="3 3" stroke-linejoin="round"/>
<polyline points="4.0,418.5 290.0,418.5 300.0,419.0 340.0,419.3 346.5,420.3 364.2,421.8 380.2,423.6 390.8,429.8 410.3,434.2 419.1,441.3 433.3,451.4 436.8,457.2 442.1,474.0 449.2,488.2 454.5,502.3 459.5,515.9 484.2,546.0 509.0,571.6 517.9,578.7 525.0,581.4 533.8,586.7 542.7,589.3 549.7,592.9 556.8,599.1 564.8,582.3 574.6,586.5 579.8,588.5 590.4,590.2 597.5,581.4 612.6,571.6 622.3,553.9 630.3,555.7 639.5,563.7 655.4,571.6 667.8,581.9 680.2,586.7 688.1,587.6 699.6,583.1 712.0,580.8 719.1,583.1 728.0,587.6 743.9,591.1 758.0,597.3 766.9,603.5 779.3,610.6 788.1,613.5 805.8,616.8 826.5,618.5 853.1,621.2 885.0,623.3 892.0,625.6 1046.0,626.3" fill="none" stroke="#0000ff" stroke-width="2" stroke-linejoin="round"/>
<polyline points="4.0,418.0 200.0,418.0 300.0,417.6 380.0,417.6 384.0,418.3 443.9,419.0 461.6,422.7 474.0,426.6 490.0,429.8 498.8,434.2 507.6,438.6 510.6,443.0 514.7,451.0 517.7,458.1 523.0,475.8 528.3,493.5 534.7,515.0 537.3,523.8 540.9,538.0 544.4,546.9 551.5,559.2 558.6,571.6 567.4,581.4 578.1,589.3 590.4,596.4 602.8,600.8 617.0,603.5 628.8,606.7 638.6,611.5 647.4,600.8 660.7,606.2 670.4,609.7 681.9,604.4 696.1,600.8 704.1,593.4 715.6,597.3 726.2,602.1 743.9,606.2 758.0,609.3 770.4,613.2 788.1,615.0 805.8,616.8 826.5,618.5 853.1,621.2 885.0,623.3 892.0,625.6 1046.0,626.3" fill="none" stroke="#ff00ff" stroke-width="3" stroke-linejoin="round"/>
<polyline points="4.0,416.5 561.0,416.5 620.4,417.4 623.9,419.2 632.7,428.0 641.6,447.5 646.9,458.1 655.8,470.5 662.8,488.2 670.8,505.9 680.2,515.9 696.1,527.4 712.0,543.3 719.1,553.9 728.0,562.4 745.7,571.6 758.0,582.3 766.9,591.1 775.8,600.8 788.1,606.2 805.8,611.5 826.5,614.1 853.1,618.5 883.2,620.8 895.6,623.8 941.6,625.6 970.8,626.2 1046.0,626.3" fill="none" stroke="#ff0000" stroke-width="3" stroke-linejoin="round"/>
<polyline points="4.0,584.5 150.5,584.5 158.5,626.5 1046.5,626.5" fill="none" stroke="#e000e0" stroke-width="1" stroke-linejoin="round"/>
</g>
<g shape-rendering="auto">
<rect x="5.5" y="3.5" width="11" height="10" rx="2.5" fill="none" stroke="#808080" stroke-width="1.2"/>
<rect x="12" y="5" width="3" height="7" fill="#808080"/>
<rect x="1060.5" y="24.5" width="11" height="10" rx="2.5" fill="none" stroke="#808080" stroke-width="1.2"/>
<rect x="1067" y="26" width="3" height="7" fill="#808080"/>
<path d="M1047.5 24.3L1052.7 29.5L1047.5 34.7L1042.3 29.5Z" fill="none" stroke="#808080" stroke-width="1"/>
<circle cx="134" cy="29" r="6" fill="#808080"/>
<path d="M131 27.8L134 30.8L137 27.8" fill="none" stroke="#000" stroke-width="1.1"/>
<circle cx="8" cy="405" r="6" fill="#808080"/>
<path d="M5 403.8L8 406.8L11 403.8" fill="none" stroke="#000" stroke-width="1.1"/>
</g>
</svg>
<div id="txt" style="position:absolute;left:0;top:0;width:1130px;height:650px;will-change:transform;opacity:0.999">
<div class="t" style="left:28px;top:2px;color:#c0c0c0;">分时</div>
<div class="t" style="left:61px;top:2px;color:#c0c0c0;">1分钟</div>
<div class="t" style="left:100px;top:2px;color:#c0c0c0;">5分钟</div>
<div class="t" style="left:139px;top:2px;color:#c0c0c0;">15分钟</div>
<div class="t" style="left:185px;top:2px;color:#c0c0c0;">30分钟</div>
<div class="t" style="left:231px;top:2px;color:#c0c0c0;">60分钟</div>
<div class="t" style="left:278px;top:2px;color:#48e8f0;">日线</div>
<div class="t" style="left:312px;top:2px;color:#c0c0c0;">周线</div>
<div class="t" style="left:345px;top:2px;color:#c0c0c0;">月线</div>
<div class="t" style="left:378px;top:2px;color:#c0c0c0;">多周期</div>
<div class="t" style="left:422px;top:2px;color:#c0c0c0;">更多<span style="margin-left:5px">&gt;</span></div>
<div class="t" style="left:816px;top:2px;color:#c0c0c0;">复权</div>
<div class="t" style="left:850px;top:2px;color:#c0c0c0;">叠加</div>
<div class="t" style="left:885px;top:2px;color:#c0c0c0;">多股</div>
<div class="t" style="left:920px;top:2px;color:#c0c0c0;">统计</div>
<div class="t" style="left:955px;top:2px;color:#c0c0c0;">画线</div>
<div class="t" style="left:993px;top:2px;color:#c0c0c0;">F10</div>
<div class="t" style="left:1025px;top:2px;color:#c0c0c0;">标记</div>
<div class="t" style="left:1057px;top:2px;color:#c0c0c0;">+自选</div>
<div class="t" style="left:1096px;top:2px;color:#c0c0c0;">返回</div>
<div class="t" style="left:2px;top:22px;color:#c0c0c0;">海马汽车(日线.前复权)</div>
<div class="t r" style="left:1080px;width:40px;top:34px;color:#ff3232">12.00</div>
<div class="t r" style="left:1080px;width:40px;top:75px;color:#ff3232">11.00</div>
<div class="t r" style="left:1080px;width:40px;top:115px;color:#ff3232">10.00</div>
<div class="t r" style="left:1080px;width:40px;top:156px;color:#ff3232">9.00</div>
<div class="t r" style="left:1080px;width:40px;top:196px;color:#ff3232">8.00</div>
<div class="t r" style="left:1080px;width:40px;top:237px;color:#ff3232">7.00</div>
<div class="t r" style="left:1080px;width:40px;top:277px;color:#ff3232">6.00</div>
<div class="t r" style="left:1080px;width:40px;top:318px;color:#ff3232">5.00</div>
<div class="t r" style="left:1080px;width:40px;top:358px;color:#ff3232">4.00</div>
<div class="t r" style="left:1080px;width:40px;top:409px;color:#ff3232">100.0</div>
<div class="t r" style="left:1080px;width:40px;top:451px;color:#ff3232">80.00</div>
<div class="t r" style="left:1080px;width:40px;top:493px;color:#ff3232">60.00</div>
<div class="t r" style="left:1080px;width:40px;top:535px;color:#ff3232">40.00</div>
<div class="t r" style="left:1080px;width:40px;top:577px;color:#ff3232">20.00</div>
<div class="t" style="left:155px;top:371px;color:#c0c0c0;">3.70</div>
<div class="t" style="left:970px;top:38px;color:#c0c0c0;">12.03</div>
<div class="t" style="left:4px;top:631px;color:#ff3232;">2025年</div>
<div class="t" style="left:191px;top:631px;color:#ff3232;">7</div>
<div class="t" style="left:378px;top:631px;color:#ff3232;">8</div>
<div class="t" style="left:728px;top:631px;color:#ff3232;">10</div>
<div class="t" style="left:867px;top:631px;color:#ff3232;">11</div>
<div style="position:absolute;left:481px;top:631px;width:77px;height:15px;background:#000080;border-left:1px solid #c00000;border-right:1px solid #c00000;box-sizing:border-box"></div>
<div class="t" style="left:482px;top:631px;color:#c0c0c0;">2025/08/20/三</div>
<div class="t" style="left:18px;top:398px;color:#c0c0c0;">股朋指标网</div>
<div class="t" style="left:82px;top:398px;color:#ffffff;">筹码5: 97.97</div>
<div class="t" style="left:156px;top:398px;color:#ffff00;">筹码10: 99.34</div>
<div class="t" style="left:235px;top:398px;color:#0000ff;">筹码20: 0.36</div>
<div class="t" style="left:309px;top:398px;color:#00ff00;">筹码30: 0.31</div>
<div class="t" style="left:382px;top:398px;color:#c0c0c0;">筹码40: 0.14</div>
<div class="t" style="left:454px;top:398px;color:#0000ff;">筹码50: 0.01</div>
<div class="t" style="left:527px;top:398px;color:#ff00ff;">筹码60: 0.01</div>
<div class="t" style="left:600px;top:398px;color:#ff0000;">筹码120: 0.00</div>
<div class="t" style="left:681px;top:398px;color:#e818e8;"><span style="letter-spacing:-0.3px">XG收集: 0.00</span></div>
<div class="b" style="left:827px;top:382px;background:#004080">财</div>
<div class="b" style="left:982px;top:382px;background:#008000">跌</div>
<div class="b" style="left:1031px;top:382px;background:#800000">涨</div>
<div class="b" style="left:1043px;top:382px;background:#804000">榜</div>
<div style="position:absolute;left:971px;top:600px;width:159px;height:50px;background:#3b3535"></div>
<div class="wm1">指标公式网</div>
<div class="wm2">www.zbgs3.com</div>
</div>
</body></html>
